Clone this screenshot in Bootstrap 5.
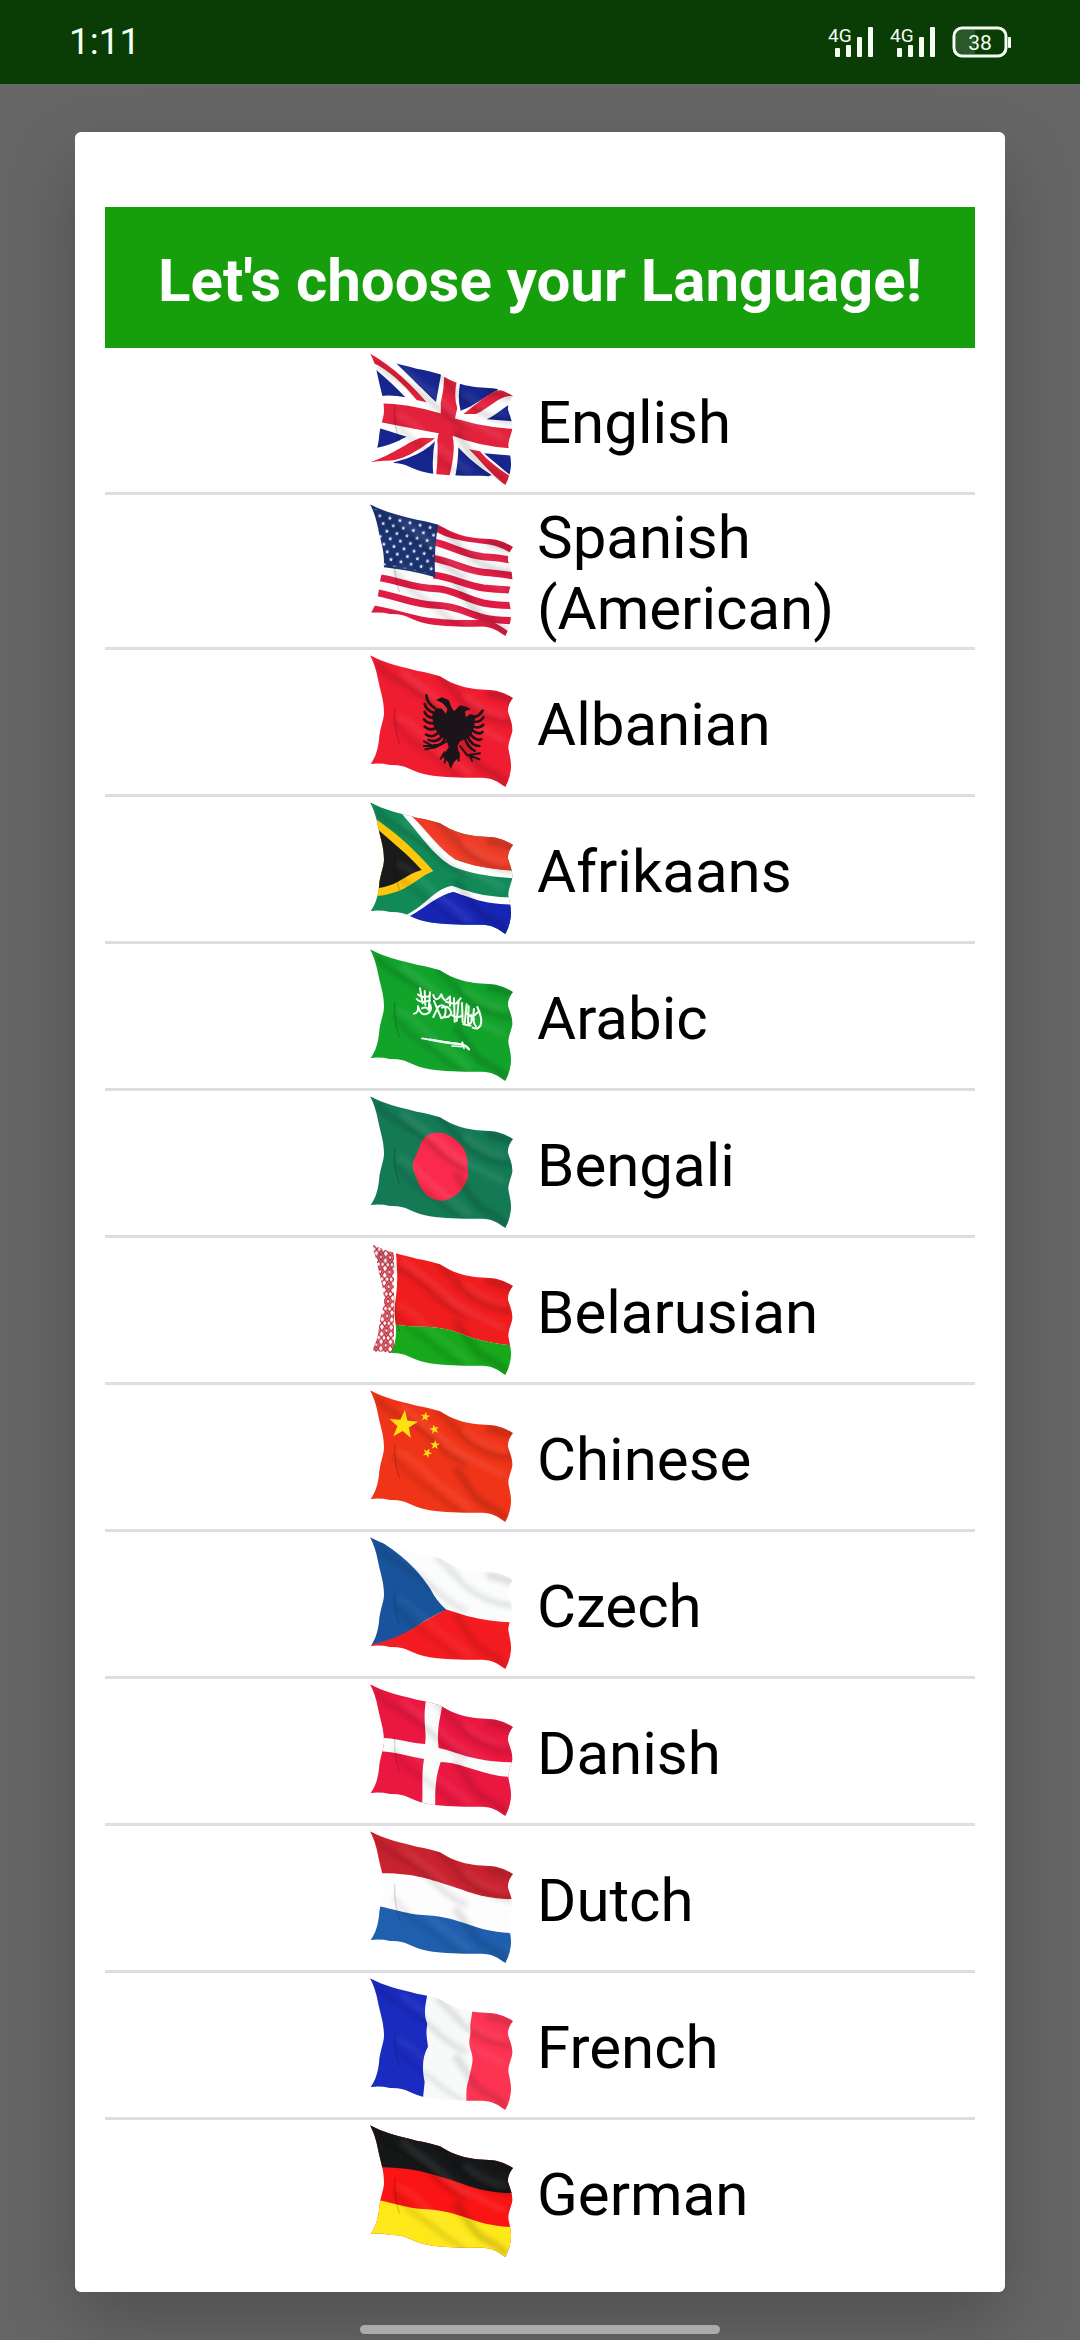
<!DOCTYPE html>
<html lang="en">
<head>
<meta charset="utf-8">
<meta name="viewport" content="width=device-width, initial-scale=1">
<title>Choose your language</title>
<link href="https://cdn.jsdelivr.net/npm/bootstrap@5.3.0/dist/css/bootstrap.min.css" rel="stylesheet">
<style>
  body { background: #666; font-family: Roboto, "Liberation Sans", sans-serif; color: #000; }
  .status-bar { height: 84px; padding: 0 69px; background: #0a3d06; color: #f4fff2; font-size: 37px; line-height: 44px; z-index: 2; }
  .status-bar svg { display: block; }
  .dialog-wrap { padding: 48px 75px 33px; }
  .dialog-box { border: 0; border-radius: 6px; padding: 75px 30px 28px; box-shadow: 0 30px 72px rgba(0, 0, 0, .22); }
  .dialog-title { background: #179e0c; font-size: 60px; line-height: 71px; padding: 38px 0 32px; }
  .lang-list { --bs-list-group-border-color: #dedede; --bs-list-group-color: #000; --bs-list-group-border-width: 3px; }
  .lang-row { padding: 0; border-width: 0 0 3px; font-size: 60px; line-height: 71px; gap: 24px; }
  .lang-row:last-child { border-bottom: 0; }
  .flag-cell { flex: 0 0 calc(50% - 27px); }
  .flag { width: 144px; height: 144px; display: block; }
  .lang-name { padding: 7px 0 3px; }
  .home-bar { width: 33.333%; height: 9px; background: #ababab; margin-bottom: 6px; z-index: 2; }
</style>
<script src="https://cdn.jsdelivr.net/npm/bootstrap@5.3.0/dist/js/bootstrap.bundle.min.js"></script>
</head>
<body class="d-flex flex-column min-vh-100">

<!-- Shared cloth outline, folds and repeated motifs -->
<svg width="0" height="0" class="position-absolute" aria-hidden="true">
  <defs>
    <clipPath id="cloth">
      <path d="M60 46C100 68 150 80 200 92Q245 100 270 109C290 122 310 132 345 142C380 150 410 149 438 152Q465 158 489 174Q472 196 474 215C480 235 488 250 487 272C484 290 475 305 475 325C478 345 486 365 482 392Q478 420 466 441C445 425 425 413 395 413C340 414 270 413 225 403C180 392 170 373 120 375Q90 368 62 372C78 350 84 325 87 300C89 265 102 240 102 218C102 180 90 150 84 118Q76 75 60 46Z"/>
    </clipPath>
    <filter id="soft" x="-20%" y="-20%" width="140%" height="140%"><feGaussianBlur stdDeviation="8"/></filter>
    <filter id="softer" x="-20%" y="-20%" width="140%" height="140%"><feGaussianBlur stdDeviation="2"/></filter>
    <g id="folds" fill="none" stroke-linecap="round">
      <g filter="url(#soft)">
        <path d="M85 75C120 120 165 125 215 165C250 190 275 230 345 262" stroke="#000" stroke-opacity=".13" stroke-width="22"/>
        <path d="M265 108C300 135 330 190 400 225C430 240 455 245 480 250" stroke="#000" stroke-opacity=".13" stroke-width="22"/>
        <path d="M135 245C165 300 210 320 250 350C280 375 300 395 340 410" stroke="#000" stroke-opacity=".1" stroke-width="18"/>
        <path d="M320 285C350 320 365 365 400 385C430 400 450 410 464 428" stroke="#000" stroke-opacity=".15" stroke-width="22"/>
        <path d="M420 160Q455 170 486 178" stroke="#000" stroke-opacity=".16" stroke-width="26"/>
        <path d="M160 95C210 140 255 160 300 210C340 245 400 270 460 300" stroke="#fff" stroke-opacity=".1" stroke-width="14"/>
        <path d="M150 230C205 255 230 305 300 350Q330 375 360 400" stroke="#fff" stroke-opacity=".09" stroke-width="14"/>
        <path d="M350 165Q395 210 462 222" stroke="#fff" stroke-opacity=".08" stroke-width="12"/>
      </g>
      <path d="M134 205Q132 265 148 308" stroke="#000" stroke-opacity=".18" stroke-width="4" filter="url(#softer)"/>
    </g>
    <path id="star" d="M0-10L2.4-3.2L9.5-3.1L3.8 1.2L5.9 8.1L0 4L-5.9 8.1L-3.8 1.2L-9.5-3.1L-2.4-3.2Z"/>
    <pattern id="stars" width="31" height="40" patternUnits="userSpaceOnUse" patternTransform="translate(84 516) rotate(13)">
      <g fill="#fff"><use href="#star" transform="translate(8 10) scale(.7)"/><use href="#star" transform="translate(23 30) scale(.7)"/></g>
    </pattern>
    <pattern id="ornament" width="28" height="44" patternUnits="userSpaceOnUse" patternTransform="translate(80 58) rotate(3)">
      <path d="M14 2L26 22L14 42L2 22ZM14 12L20 22L14 32L8 22ZM0 0L8 10M28 0L20 10M0 44L8 34M28 44L20 34" fill="none" stroke="#c01f30" stroke-width="4"/>
    </pattern>
  </defs>
</svg>

<header class="status-bar d-flex align-items-center justify-content-between position-relative">
  <time>1:11</time>
  <svg width="187" height="48" viewBox="824 18 187 48" font-family="Roboto, sans-serif" fill="#f4fff2" role="img" aria-label="Two 4G signals, battery at 38 percent">
    <g id="signal">
      <text x="828" y="42" font-size="19">4G</text>
      <rect x="835" y="48" width="5" height="9" rx="1"/><rect x="846" y="45" width="5" height="12" rx="1"/>
      <rect x="857" y="37" width="5" height="20" rx="1"/><rect x="868" y="27" width="5" height="30" rx="1"/>
    </g>
    <use href="#signal" x="62"/>
    <path d="M962 30H975V54H962Q956 54 956 48V36Q956 30 962 30Z" fill-opacity=".14"/>
    <rect x="954" y="28" width="52" height="28" rx="8" fill="none" stroke="#f4fff2" stroke-width="3"/>
    <rect x="1008" y="37" width="3" height="11" rx="1"/>
    <text x="980" y="50" font-size="21" text-anchor="middle">38</text>
  </svg>
</header>

<main class="dialog-wrap flex-grow-1 d-flex flex-column">
  <section class="card dialog-box flex-grow-1" role="dialog" aria-labelledby="dlg-title">
    <h1 class="dialog-title text-white text-center fw-bold m-0" id="dlg-title">Let's choose your Language!</h1>
    <div class="list-group list-group-flush lang-list">

      <button type="button" class="list-group-item list-group-item-action lang-row d-flex align-items-center">
        <span class="flag-cell d-flex justify-content-end"><svg class="flag" viewBox="57 30 432 432" aria-hidden="true"><g clip-path="url(#cloth)">
          <g transform="translate(0 6)">
            <path fill="#fff" d="M50 30H500V450H50Z"/>
            <path fill="#17268f" d="M76 88C110 115 140 145 166 172Q130 164 90 168ZM140 66L274 98L258 186C225 155 180 110 140 71ZM330 130L444 140V150C410 165 370 200 332 212Q322 180 330 130ZM490 188V244L410 238C440 225 460 200 490 188ZM85 263L170 290C140 305 110 320 70 324ZM255 303C235 325 200 350 130 367L180 400L250 405Q245 350 255 303ZM325 322C350 350 385 380 425 405L400 415H315Q325 360 325 322ZM402 340L490 347V410L480 405C455 385 425 360 402 340Z"/>
            <path fill="#e3213c" d="M283 108L321 120Q310 170 322 205Q312 240 308 290Q318 330 298 410H258Q265 350 262 300Q275 240 272 190Q282 150 283 108ZM90 190Q170 190 270 220Q380 262 495 267V326Q390 320 310 288Q200 268 85 245ZM50 35C130 80 180 130 230 187L200 180C160 130 110 85 68 68ZM340 222C385 190 420 150 460 150L490 160V168C445 165 420 205 378 222ZM55 368C130 345 180 300 215 293L256 295C210 325 160 367 100 362ZM357 328L390 334C410 360 450 390 480 408L467 437C420 400 390 360 357 328Z"/>
          </g><use href="#folds"/></g></svg></span>
        <span class="lang-name">English</span>
      </button>

      <button type="button" class="list-group-item list-group-item-action lang-row d-flex align-items-center">
        <span class="flag-cell d-flex justify-content-end"><svg class="flag" viewBox="57 30 432 432" aria-hidden="true"><g clip-path="url(#cloth)">
          <g transform="translate(0 -447)">
            <path fill="#fbfbfc" d="M50 480H500V900H50Z"/>
            <g fill="none" stroke="#de1c43" stroke-width="21">
              <path d="M255 562C310 592 340 592 400 601Q440 602 492 632"/>
              <path d="M250 606C300 615 340 645 400 650Q440 652 492 662"/>
              <path d="M250 655C310 665 340 690 400 697Q440 700 492 708"/>
              <path d="M250 705C310 712 340 735 400 744Q440 748 492 751"/>
              <path d="M80 712C150 722 190 745 260 746C310 748 340 775 400 789Q440 796 492 797"/>
              <path d="M76 757C150 770 190 795 260 796C320 798 350 820 400 833Q440 842 492 842"/>
              <path d="M60 806C130 812 190 842 260 846C320 855 370 848 410 850Q440 860 475 888"/>
            </g>
            <path fill="#1b3270" d="M50 480L265 550Q250 640 256 712Q180 690 102 682L80 560Z"/>
            <path fill="url(#stars)" d="M66 505L260 560Q247 640 252 705Q180 686 102 676L80 560Z"/>
          </g><use href="#folds"/></g></svg></span>
        <span class="lang-name">Spanish (American)</span>
      </button>

      <button type="button" class="list-group-item list-group-item-action lang-row d-flex align-items-center">
        <span class="flag-cell d-flex justify-content-end"><svg class="flag" viewBox="57 30 432 432" aria-hidden="true"><g clip-path="url(#cloth)">
          <path fill="#f01c30" d="M50 30H500V450H50Z"/><use href="#folds"/>
          <path fill="#1c1418" d="M258 180L275 172L296 180L304 200L312 214L330 196L350 200L362 208L345 214L348 232L360 222L376 226L372 262L362 288L345 298L330 304L322 318L330 350L312 366L302 386L294 366L278 350L296 322L290 300L268 286L252 262L246 228L258 204L276 206L288 222L292 206L278 190Z"/>
          <g fill="none" stroke="#1c1418" stroke-width="8" stroke-linecap="round">
            <path d="M254 204Q232 190 229 166M250 218Q228 210 224 192M250 234Q230 232 224 216M252 250Q232 252 222 238M258 264Q238 274 224 260M266 276Q250 296 228 284M276 288Q262 310 236 300M284 296Q278 318 252 316"/>
            <path d="M374 232Q390 226 398 212M374 246Q392 246 400 232M372 260Q390 266 400 254M368 272Q386 286 398 276M362 284Q380 304 394 298M354 292Q366 318 388 318M346 298Q354 322 374 332"/>
            <path stroke-width="6" d="M290 304L256 322L222 304M256 322L226 328M244 318L222 318M330 318L352 346L390 340M358 346L388 358M358 346L366 362M284 336L272 356M326 338L326 362M288 350L284 368"/>
          </g></g></svg></span>
        <span class="lang-name">Albanian</span>
      </button>

      <button type="button" class="list-group-item list-group-item-action lang-row d-flex align-items-center">
        <span class="flag-cell d-flex justify-content-end"><svg class="flag" viewBox="57 30 432 432" aria-hidden="true"><g clip-path="url(#cloth)">
          <g transform="translate(0 -441)">
            <path fill="#128a58" d="M50 470H500V890H50Z"/>
            <path fill="#ffc60b" d="M70 532C140 580 190 625 250 693C200 715 180 745 130 758Q100 768 70 770Z"/>
            <path fill="#1b1a1a" d="M80 565C130 610 170 640 215 690C170 702 150 728 120 736Q100 744 75 746Z"/>
            <path fill="#fff" d="M145 500L200 525C230 560 270 620 315 658Q380 684 495 692V715Q380 708 310 680C250 650 210 580 145 510ZM150 832C225 805 245 750 305 737C360 755 400 772 495 772V797H420L310 756C270 765 240 800 180 835Z"/>
            <path fill="#ee3b26" d="M184 522L500 570V692C430 690 370 680 315 658C260 620 230 570 184 527Z"/>
            <path fill="#1725b5" d="M180 828C230 800 265 765 310 756C370 775 400 794 500 794V890H200Z"/>
          </g><use href="#folds"/></g></svg></span>
        <span class="lang-name">Afrikaans</span>
      </button>

      <button type="button" class="list-group-item list-group-item-action lang-row d-flex align-items-center">
        <span class="flag-cell d-flex justify-content-end"><svg class="flag" viewBox="57 30 432 432" aria-hidden="true"><g clip-path="url(#cloth)">
          <path fill="#12a32b" d="M50 30H500V450H50Z"/><use href="#folds"/>
          <g transform="translate(0 3)" fill="none" stroke="#f6fff6" stroke-width="6" stroke-linecap="round" stroke-linejoin="round">
            <path d="M210 160L218 205M224 168L226 210M240 172L236 226M204 178Q214 190 236 184M200 192Q210 206 240 196M192 236Q206 234 204 214Q214 250 238 232Q246 222 240 208M216 220Q228 214 234 222"/>
            <path d="M250 180Q254 200 268 188L274 178Q282 206 296 188L300 184V212M252 198L274 250Q290 246 286 218Q276 204 264 216L250 246M276 218Q296 208 304 232Q300 250 280 246M288 200L312 206"/>
            <path d="M312 190L314 260M326 200L320 258M336 204L338 262M350 208L344 266M318 206L332 190M306 240Q322 254 338 240M356 214L354 264Q368 272 364 240M372 222Q366 262 378 274M382 216Q398 250 392 270Q384 286 368 278M340 268L362 272M388 228L372 242M352 236L372 252"/>
            <path stroke-width="5" d="M216 310Q270 320 335 327"/>
            <path stroke-width="7" d="M240 314Q290 325 335 328Q350 332 357 343"/>
            <path stroke-width="5" d="M337 321L342 340M306 333L336 335"/>
          </g></g></svg></span>
        <span class="lang-name">Arabic</span>
      </button>

      <button type="button" class="list-group-item list-group-item-action lang-row d-flex align-items-center">
        <span class="flag-cell d-flex justify-content-end"><svg class="flag" viewBox="57 30 432 432" aria-hidden="true"><g clip-path="url(#cloth)">
          <path fill="#147a56" d="M50 30H500V450H50Z"/>
          <path transform="translate(0 -438)" fill="#fb2a4c" d="M252 593C290 588 325 612 345 648C358 680 350 695 355 718C350 755 318 790 282 797C245 800 215 775 203 738C195 715 184 705 190 678C198 660 205 650 212 625C222 605 235 597 252 593Z"/>
          <use href="#folds"/></g></svg></span>
        <span class="lang-name">Bengali</span>
      </button>

      <button type="button" class="list-group-item list-group-item-action lang-row d-flex align-items-center">
        <span class="flag-cell d-flex justify-content-end"><svg class="flag" viewBox="57 30 432 432" aria-hidden="true"><g clip-path="url(#cloth)">
          <g transform="translate(0 6)">
            <path fill="#fff" d="M50 30H500V450H50Z"/>
            <path fill="url(#ornament)" d="M70 30H132V400H70Z"/>
            <path fill="#f01d1f" d="M136 50H500V348Q430 342 370 325C320 305 280 290 220 290Q180 290 137 284Q130 240 138 200Q146 140 136 50Z"/>
            <path fill="#17a81b" d="M137 284Q180 290 220 290C280 290 320 305 370 325Q430 342 500 348V450H110L124 368Q142 330 137 284Z"/>
          </g><use href="#folds" opacity=".9"/></g></svg></span>
        <span class="lang-name">Belarusian</span>
      </button>

      <button type="button" class="list-group-item list-group-item-action lang-row d-flex align-items-center">
        <span class="flag-cell d-flex justify-content-end"><svg class="flag" viewBox="57 30 432 432" aria-hidden="true"><g clip-path="url(#cloth)">
          <path fill="#f03418" d="M50 30H500V450H50Z"/><use href="#folds"/>
          <g transform="translate(0 -435)" fill="#ffe010">
            <use href="#star" transform="translate(160 585) rotate(6) scale(4.5)"/>
            <use href="#star" transform="translate(226 560) rotate(8) scale(1.5)"/>
            <use href="#star" transform="translate(253 598) rotate(-12) scale(1.5)"/>
            <use href="#star" transform="translate(255 645) rotate(4) scale(1.5)"/>
            <use href="#star" transform="translate(232 669) rotate(25) scale(1.5)"/>
          </g></g></svg></span>
        <span class="lang-name">Chinese</span>
      </button>

      <button type="button" class="list-group-item list-group-item-action lang-row d-flex align-items-center">
        <span class="flag-cell d-flex justify-content-end"><svg class="flag" viewBox="57 30 432 432" aria-hidden="true"><g clip-path="url(#cloth)">
          <g transform="translate(0 9)">
            <path fill="#fbfcfc" d="M50 20H500V450H50Z"/>
            <path fill="#f41c20" d="M287 253C340 270 400 292 500 292V450H60V360C150 340 200 300 287 253Z"/>
            <path fill="#19539b" d="M50 25C150 80 200 130 240 190Q260 230 289 254C210 285 180 335 60 360Z"/>
          </g><use href="#folds" opacity=".7"/></g></svg></span>
        <span class="lang-name">Czech</span>
      </button>

      <button type="button" class="list-group-item list-group-item-action lang-row d-flex align-items-center">
        <span class="flag-cell d-flex justify-content-end"><svg class="flag" viewBox="57 30 432 432" aria-hidden="true"><g clip-path="url(#cloth)">
          <path fill="#ea1740" d="M50 30H500V450H50Z"/>
          <path transform="translate(0 -432)" fill="#fafbfb" d="M229 520L277 535C274 570 258 610 266 669C320 680 370 712 495 712V757C400 755 340 712 272 711C255 760 255 800 256 850H214C222 810 212 760 222 702C180 696 140 680 80 678V638C140 638 180 654 225 657C232 620 216 590 229 520Z"/>
          <use href="#folds" opacity=".8"/></g></svg></span>
        <span class="lang-name">Danish</span>
      </button>

      <button type="button" class="list-group-item list-group-item-action lang-row d-flex align-items-center">
        <span class="flag-cell d-flex justify-content-end"><svg class="flag" viewBox="57 30 432 432" aria-hidden="true"><g clip-path="url(#cloth)">
          <g transform="translate(0 12)">
            <path fill="#fdfdfd" d="M50 20H500V450H50Z"/>
            <path fill="#c9222f" d="M50 20H500V238C400 236 370 220 310 200C240 180 200 158 80 160Z"/>
            <path fill="#1f5fae" d="M70 256C140 268 170 284 230 286C340 292 370 338 500 340V450H50Z"/>
          </g><use href="#folds" opacity=".8"/></g></svg></span>
        <span class="lang-name">Dutch</span>
      </button>

      <button type="button" class="list-group-item list-group-item-action lang-row d-flex align-items-center">
        <span class="flag-cell d-flex justify-content-end"><svg class="flag" viewBox="57 30 432 432" aria-hidden="true"><g clip-path="url(#cloth)">
          <g transform="translate(0 -429)">
            <path fill="#f8fafa" d="M50 470H500V890H50Z"/>
            <path fill="#1a2bc0" d="M50 460L233 520C225 560 220 580 232 612C226 640 232 660 234 680C216 710 216 750 224 785L218 845H50Z"/>
            <path fill="#fc3452" d="M368 565H500V890H348C352 840 344 810 356 780C364 740 374 720 362 690C352 660 364 650 361 625C360 610 364 600 368 565Z"/>
          </g><use href="#folds" opacity=".75"/></g></svg></span>
        <span class="lang-name">French</span>
      </button>

      <button type="button" class="list-group-item list-group-item-action lang-row d-flex align-items-center">
        <span class="flag-cell d-flex justify-content-end"><svg class="flag" viewBox="57 30 432 432" aria-hidden="true"><g clip-path="url(#cloth)">
          <path fill="#fa1414" d="M50 30H500V450H50Z"/>
          <path fill="#161718" d="M50 30H500V250C400 248 370 232 310 212C240 192 200 172 80 172Z"/>
          <path fill="#ffe81a" d="M70 268C140 280 170 296 230 298C340 304 370 350 500 352V450H50Z"/>
          <use href="#folds"/></g></svg></span>
        <span class="lang-name">German</span>
      </button>

    </div>
  </section>
</main>

<div class="home-bar rounded-pill mx-auto position-relative"></div>
</body>
</html>
